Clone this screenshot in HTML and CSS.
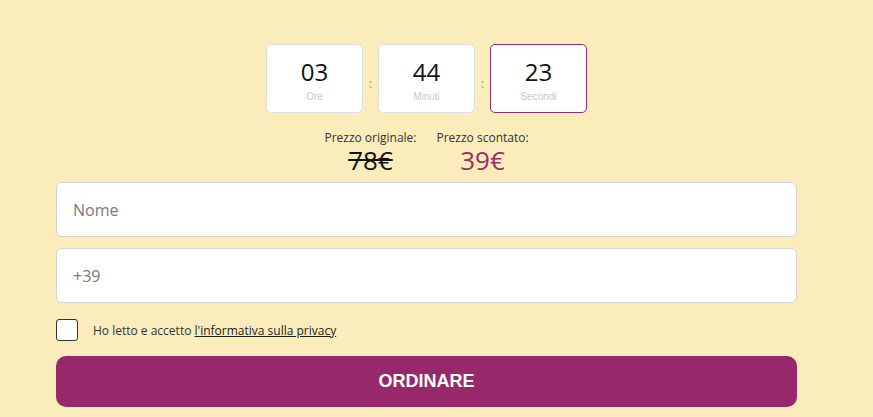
FILE: index.html
```html
<!DOCTYPE html>
<html lang="it">
    <head>
        <meta charset="utf-8">
        <title>Ordina ora</title>
        <link rel="stylesheet" href="styles.css">
    </head>
    <body>
        <div class="topBanner"></div>
        <div class="orderBox">
            <div class="timer">
                <div class="timeCell">
                    <span class="timeValue">03</span>
                    <span class="timeLabel">Ore</span>
                </div>
                <span class="timeSep">:</span>
                <div class="timeCell">
                    <span class="timeValue">44</span>
                    <span class="timeLabel">Minuti</span>
                </div>
                <span class="timeSep">:</span>
                <div class="timeCell timeCellActive">
                    <span class="timeValue">23</span>
                    <span class="timeLabel">Secondi</span>
                </div>
            </div>
            <div class="prices">
                <div class="priceCol">
                    <span class="priceLabel">Prezzo originale:</span>
                    <span class="priceOld">78€</span>
                </div>
                <div class="priceCol">
                    <span class="priceLabel">Prezzo scontato:</span>
                    <span class="priceNew">39€</span>
                </div>
            </div>
            <form class="orderForm">
                <input class="field" type="text" placeholder="Nome">
                <input class="field" type="tel" placeholder="+39">
                <label class="privacy">
                    <span class="checkBox"></span>
                    <span>Ho letto e accetto <a href="#">l'informativa sulla privacy</a></span>
                </label>
                <button type="button" class="orderButton">ORDINARE</button>
            </form>
        </div>
    </body>
</html>
```
FILE: styles.css
```css
body {
    margin: 0;
    background: #fbedbb;
    font-family: "Open Sans", "Liberation Sans", sans-serif;
}
.topBanner {
    height: 44px;
}
.orderBox {
    width: 741px;
    margin-left: 56px;
}
.timer {
    display: flex;
    justify-content: center;
}
.timeCell {
    width: 95px;
    height: 55px;
    background: white;
    border: 1px solid #dddddd;
    border-radius: 5px;
    display: flex;
    flex-direction: column;
    align-items: center;
    padding-top: 12px;
}
.timeCellActive {
    border-color: #97296a;
}
.timeValue {
    font-size: 24px;
    line-height: 30px;
    color: #111111;
}
.timeLabel {
    font-family: "Liberation Sans", Arial, sans-serif;
    font-size: 10px;
    line-height: 12px;
    margin-top: 4px;
    color: #c8c8c8;
}
.timeSep {
    width: 15px;
    text-align: center;
    font-size: 13px;
    color: #999999;
    padding-top: 30px;
}
.prices {
    display: flex;
    justify-content: center;
    gap: 20px;
    margin-top: 18px;
}
.priceCol {
    display: flex;
    flex-direction: column;
    align-items: center;
}
.priceLabel {
    font-size: 12px;
    line-height: 14px;
    color: #333333;
}
.priceOld, .priceNew {
    font-size: 26px;
    line-height: 30px;
}
.priceOld {
    color: #111111;
    text-decoration: line-through;
}
.priceNew {
    color: #983068;
}
.orderForm {
    display: flex;
    flex-direction: column;
    margin-top: 7px;
}
.field {
    height: 55px;
    box-sizing: border-box;
    border: 1px solid #d3d3d3;
    border-radius: 6px;
    padding: 0 16px;
    font-family: "Open Sans", sans-serif;
    font-size: 16px;
    margin-bottom: 11px;
}
.field::placeholder {
    color: #7a7a7a;
}
.privacy {
    display: flex;
    align-items: center;
    gap: 15px;
    margin-top: 5px;
    font-size: 12px;
    color: #333333;
}
.privacy a {
    color: #222222;
}
.checkBox {
    width: 20px;
    height: 20px;
    border: 1px solid #333333;
    border-radius: 3px;
    background: white;
}
.orderButton {
    margin-top: 15px;
    height: 51px;
    border: none;
    border-radius: 10px;
    background: #97296a;
    color: white;
    font-family: "Liberation Sans", Arial, sans-serif;
    font-weight: bold;
    font-size: 18px;
}
```
